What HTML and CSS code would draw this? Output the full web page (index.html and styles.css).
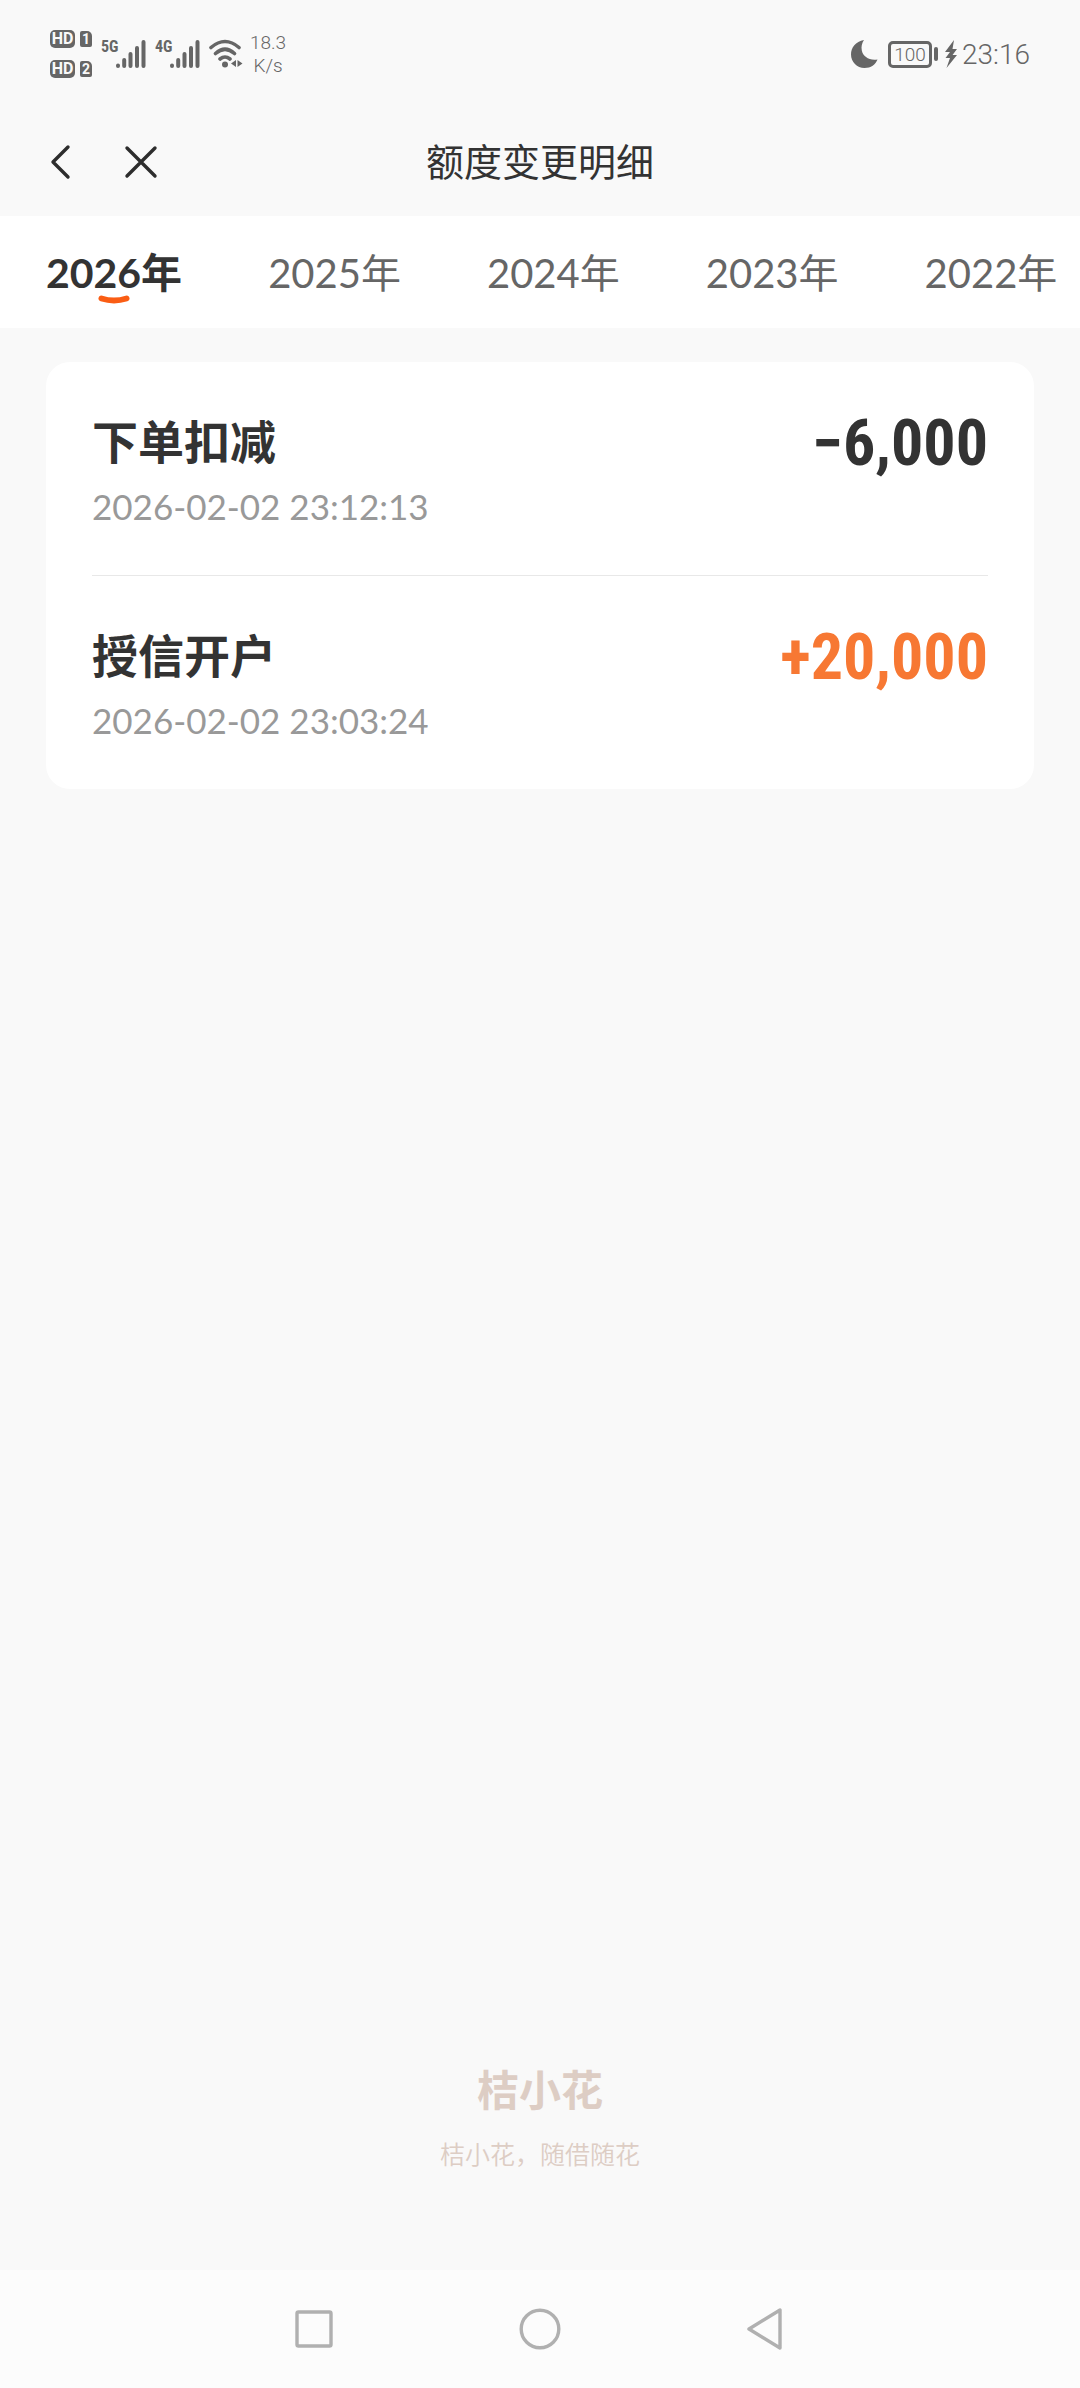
FILE: index.html
```html
<!DOCTYPE html>
<html lang="zh-CN">
<head>
<meta charset="utf-8">
<meta name="viewport" content="width=device-width, initial-scale=1">
<title>额度变更明细</title>
<link rel="stylesheet" href="styles.css">
</head>
<body>
<div class="status">
  <div class="status-group">
    <div class="sims">
      <div class="sim"><span class="hd">HD</span><span class="slot">1</span></div>
      <div class="sim"><span class="hd">HD</span><span class="slot">2</span></div>
    </div>
    <div class="signal">
      <span class="net">5G</span>
      <svg width="30" height="28" viewBox="0 0 30 28" fill="none" stroke="#666" stroke-width="4" stroke-linecap="round"><path d="M2 25.500v.5M8.200 20v6M14.500 14v12M21 8v18M27.500 2v24"/></svg>
    </div>
    <div class="signal">
      <span class="net">4G</span>
      <svg width="30" height="28" viewBox="0 0 30 28" fill="none" stroke="#666" stroke-width="4" stroke-linecap="round"><path d="M2 25.500v.5M8.200 20v6M14.500 14v12M21 8v18M27.500 2v24"/></svg>
    </div>
    <svg class="wifi" width="34" height="30" viewBox="0 0 34 30" fill="none" stroke="#666" stroke-width="3.600" stroke-linecap="round"><path d="M2 8.500Q16 -3.500 30 8.500M6.500 14.500Q16 6 25.500 14.500M11 20Q16 16 21 20"/><circle cx="16" cy="25.500" r="3" fill="#666" stroke="none"/><path d="M27 21v7l-5-3.500zM28.500 21v7l5-3.500z" fill="#666" stroke="none"/></svg>
    <div class="speed"><span>18.3</span><span>K/s</span></div>
  </div>
  <div class="status-group status-right">
    <svg class="moon" width="28" height="30" viewBox="0 0 28 30" fill="#666"><path d="M13 1C4.500 2.500 0 8.500 0 15.500 0 23 6 29 13.500 29 20 29 24.500 25.500 26.500 20.500 18.500 22 12 17.500 10.800 11.500 10 7.500 11 4 13 1z"/></svg>
    <span class="battery">100</span>
    <span class="battery-cap"></span>
    <svg class="bolt" width="14" height="30" viewBox="0 0 14 30" fill="#666"><path d="M10 1 1 13h5l-4.500 6H6L2.500 29 13 16H8.500L13 10H8.500z"/></svg>
    <time class="clock">23:16</time>
  </div>
</div>

<header class="header">
  <div class="header-actions">
    <button class="icon-button" type="button" aria-label="返回"><svg width="22" height="36" viewBox="0 0 22 36" fill="none" stroke="#2d2d2d" stroke-width="3.400" stroke-linecap="round" stroke-linejoin="round"><path d="M18 3 3 18l15 15"/></svg></button>
    <button class="icon-button" type="button" aria-label="关闭"><svg width="34" height="34" viewBox="0 0 34 34" fill="none" stroke="#2d2d2d" stroke-width="3.400" stroke-linecap="round"><path d="M3 3l28 28M31 3 3 31"/></svg></button>
  </div>
  <h1 class="header-title">额度变更明细</h1>
  <div></div>
</header>

<nav class="tabs">
  <a class="tab tab-active" href="#2026">2026年<svg class="smile" width="32" height="10" viewBox="0 0 32 10" fill="none" stroke="#fa5d14" stroke-width="6" stroke-linecap="round"><path d="M3.500 3.500Q16 7.500 28.500 3.500"/></svg></a>
  <a class="tab" href="#2025">2025年</a>
  <a class="tab" href="#2024">2024年</a>
  <a class="tab" href="#2023">2023年</a>
  <a class="tab" href="#2022">2022年</a>
</nav>

<main class="content">
  <ul class="card">
    <li class="record">
      <div>
        <h2 class="record-title">下单扣减</h2>
        <time class="record-time">2026-02-02 23:12:13</time>
      </div>
      <strong class="amount">−6,000</strong>
    </li>
    <li class="record">
      <div>
        <h2 class="record-title">授信开户</h2>
        <time class="record-time">2026-02-02 23:03:24</time>
      </div>
      <strong class="amount amount-plus">+20,000</strong>
    </li>
  </ul>
</main>

<footer class="brand">
  <p class="brand-name">桔小花</p>
  <p class="brand-slogan">桔小花，随借随花</p>
</footer>

<div class="system-nav">
  <button class="icon-button" type="button" aria-label="最近任务"><svg width="44" height="44" viewBox="0 0 44 44" fill="none" stroke="#b0b0b0" stroke-width="3.400"><rect x="5" y="5" width="34" height="34" rx="1.500"/></svg></button>
  <button class="icon-button" type="button" aria-label="主屏幕"><svg width="44" height="44" viewBox="0 0 44 44" fill="none" stroke="#b0b0b0" stroke-width="3.400"><circle cx="22" cy="22" r="18.800"/></svg></button>
  <button class="icon-button" type="button" aria-label="返回上一级"><svg width="44" height="44" viewBox="0 0 44 44" fill="none" stroke="#b0b0b0" stroke-width="3.400" stroke-linejoin="round"><path d="M36 3v38L5 22z"/></svg></button>
</div>
</body>
</html>
```

FILE: styles.css
```css
* {
  box-sizing: border-box;
  margin: 0;
  padding: 0;
}

body {
  display: flex;
  flex-direction: column;
  min-height: 100vh;
  background: #f9f9f9;
  color: #333;
  font-family: Lato, "Noto Sans CJK SC", sans-serif;
}

.icon-button {
  display: flex;
  border: 0;
  background: none;
}

/* Phone status bar */
.status {
  display: flex;
  justify-content: space-between;
  align-items: center;
  height: 108px;
  padding: 0 50px;
  color: #666;
  font-family: Roboto, "Noto Sans CJK SC", sans-serif;
}

.status-group {
  display: flex;
  align-items: center;
}

.sims {
  display: grid;
  gap: 12px;
}

.sim {
  display: flex;
  align-items: center;
  gap: 5px;
}

.hd,
.slot {
  background: #666;
  color: #f9f9f9;
  font-size: 16px;
  font-weight: 700;
  line-height: 18px;
  text-align: center;
}

.hd {
  width: 25px;
  border-radius: 5px;
}

.slot {
  width: 12px;
  border-radius: 2px 5px 2px 2px;
  font-size: 14px;
  line-height: 16px;
}

.signal {
  display: flex;
  margin-left: 9px;
}

.net {
  width: 15px;
  font-family: "Roboto Condensed", Roboto, sans-serif;
  font-size: 16px;
  font-weight: 700;
  line-height: 14px;
}

.wifi {
  margin-left: 9px;
}

.speed {
  display: grid;
  margin-left: 7px;
  font-size: 19px;
  font-weight: 300;
  line-height: 23px;
  text-align: center;
}

.battery {
  width: 44px;
  height: 27px;
  margin-left: 9px;
  border: 3px solid #666;
  border-radius: 5px;
  font-size: 19px;
  font-weight: 300;
  line-height: 21px;
  text-align: center;
}

.battery-cap {
  width: 4px;
  height: 14px;
  margin: 0 6px 0 2px;
  border-radius: 2px;
  background: #666;
}

.clock {
  margin-left: 4px;
  font-size: 28px;
  font-weight: 300;
}

/* Page header */
.header {
  display: grid;
  grid-template-columns: 1fr auto 1fr;
  align-items: center;
  height: 108px;
  padding: 0 50px;
}

.header-actions {
  display: flex;
  align-items: center;
  gap: 52px;
}

.header-title {
  padding-bottom: 2px;
  font-size: 38px;
  font-weight: 400;
  line-height: 56px;
}

/* Year tabs */
.tabs {
  display: flex;
  align-items: center;
  gap: 86px;
  height: 112px;
  padding: 2px 46px 0;
  overflow: hidden;
  background: #fff;
}

.tab {
  position: relative;
  flex: none;
  color: #666;
  font-size: 40px;
  line-height: 56px;
  text-decoration: none;
}

.tab-active {
  color: #333;
  font-size: 41px;
  font-weight: 700;
}

.smile {
  position: absolute;
  left: 50%;
  bottom: -4px;
  margin-left: -16px;
}

/* Records */
.content {
  flex: 1;
  padding: 34px 46px;
}

.card {
  padding: 0 46px;
  border-radius: 24px;
  background: #fff;
  list-style: none;
}

.record {
  display: flex;
  justify-content: space-between;
  padding: 48px 0 37px;
}

.record + .record {
  border-top: 1px solid #e8e8e8;
}

.record-title {
  font-size: 46px;
  font-weight: 700;
  line-height: 64px;
}

.record-time {
  display: block;
  color: #999;
  font-size: 35px;
  line-height: 64px;
}

.amount {
  font-family: "Roboto Condensed", "Liberation Sans Narrow", Roboto, sans-serif;
  font-size: 64px;
  font-weight: 700;
  line-height: 68px;
}

.amount-plus {
  color: #f77833;
}

/* Brand footer */
.brand {
  padding-bottom: 96px;
  color: #ddcdc4;
  text-align: center;
}

.brand-name {
  font-size: 42px;
  font-weight: 700;
  line-height: 64px;
}

.brand-slogan {
  margin-top: 12px;
  font-size: 25px;
  font-weight: 350;
  line-height: 40px;
}

/* System navigation */
.system-nav {
  display: flex;
  justify-content: center;
  gap: 182px;
  padding: 37px 0;
  background: #fcfcfc;
}
```
